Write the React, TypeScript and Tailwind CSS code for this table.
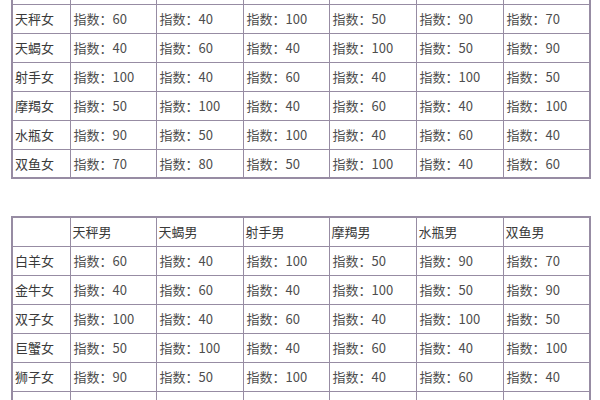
const men = ["天秤男", "天蝎男", "射手男", "摩羯男", "水瓶男", "双鱼男"];

const values = [
  [60, 40, 100, 50, 90, 70],
  [40, 60, 40, 100, 50, 90],
  [100, 40, 60, 40, 100, 50],
  [50, 100, 40, 60, 40, 100],
  [90, 50, 100, 40, 60, 40],
  [70, 80, 50, 100, 40, 60],
];

const colWidths = ["w-[58px]", "w-[86px]", "w-[87px]", "w-[86px]", "w-[87px]", "w-[87px]", "w-[87px]"];

const cell = "h-[29px] border border-[#978ca3] px-[2px] text-left align-middle font-normal";

function MatchTable({ women, className }: { women: string[]; className: string }) {
  return (
    <table className={`ml-[11px] w-[578px] table-fixed border-collapse border-2 border-[#978ca3] ${className}`}>
      <colgroup>
        {colWidths.map((w, i) => (
          <col key={i} className={w} />
        ))}
      </colgroup>
      <thead>
        <tr>
          <th className={cell}></th>
          {men.map((m) => (
            <th key={m} className={cell}>
              {m}
            </th>
          ))}
        </tr>
      </thead>
      <tbody>
        {women.map((w, r) => (
          <tr key={w}>
            <td className={cell}>{w}</td>
            {values[r].map((v, c) => (
              <td key={c} className={`${cell} pl-[3px] text-[#4d4d4d]`}>
                指数：{v}
              </td>
            ))}
          </tr>
        ))}
      </tbody>
    </table>
  );
}

export default function App() {
  return (
    <div
      className="h-[400px] w-[600px] overflow-hidden bg-white text-[13px] leading-none text-[#3a3a3a]"
      style={{ fontFamily: '"Noto Sans CJK SC", "Noto Sans", sans-serif' }}
    >
      <MatchTable
        className="-mt-[26px]"
        women={["天秤女", "天蝎女", "射手女", "摩羯女", "水瓶女", "双鱼女"]}
      />
      <MatchTable
        className="mt-[37px]"
        women={["白羊女", "金牛女", "双子女", "巨蟹女", "狮子女", "处女女"]}
      />
    </div>
  );
}
